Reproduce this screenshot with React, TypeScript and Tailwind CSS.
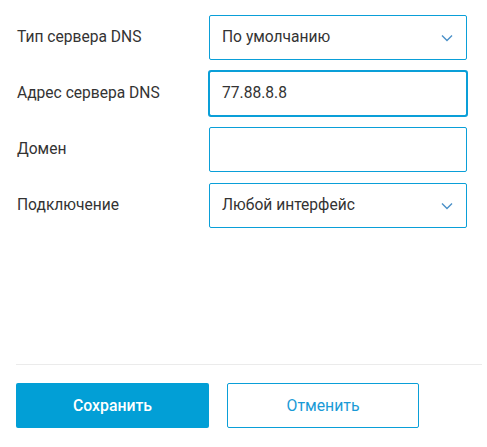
import React from "react";

const Chevron = () => (
  <svg width="12" height="8" viewBox="0 0 12 8" className="absolute right-[13px] top-1/2 -translate-y-1/2">
    <path d="M1 1.5 L6 6.5 L11 1.5" fill="none" stroke="#4a90c8" strokeWidth="1.4" />
  </svg>
);

function Row({ label, children }: { label: string; children: React.ReactNode }) {
  return (
    <div className="flex items-center">
      <div className="w-[193px] pl-px text-[15.6px] text-[#333333]">{label}</div>
      {children}
    </div>
  );
}

export default function App() {
  return (
    <div
      className="w-[487px] h-[447px] bg-white pl-4 pr-[5px] pt-[15px]"
      style={{ fontFamily: "Roboto, 'Noto Sans', sans-serif" }}
    >
      <div className="flex flex-col gap-[11px]">
        <Row label="Тип сервера DNS">
          <div className="relative w-[258px] h-[45px] border border-[#0a9fd8] rounded-[2px] flex items-center pl-3 text-[15.6px] text-[#333333]">
            По умолчанию
            <Chevron />
          </div>
        </Row>
        <Row label="Адрес сервера DNS">
          <div className="relative w-[258px] h-[45px] border border-[#0a9fd8] outline outline-2 outline-offset-[-1px] outline-[#0a9fd8] rounded-[2px] flex items-center pl-3 text-[15.6px] text-[#333333]">
            77.88.8.8
          </div>
        </Row>
        <Row label="Домен">
          <div className="w-[258px] h-[45px] border border-[#0a9fd8] rounded-[2px]" />
        </Row>
        <Row label="Подключение">
          <div className="relative w-[258px] h-[45px] border border-[#0a9fd8] rounded-[2px] flex items-center pl-3 text-[15.6px] text-[#333333]">
            Любой интерфейс
            <Chevron />
          </div>
        </Row>
      </div>
      <div className="mt-[136px] h-px bg-[#ebebeb]" />
      <div className="mt-[18px] flex gap-[18px]">
        <button className="w-[193px] h-[45px] rounded-[2px] bg-[#029fd6] text-white text-[15.8px] font-medium">
          Сохранить
        </button>
        <button className="w-[192px] h-[45px] rounded-[2px] border border-[#0a9fd8] bg-white text-[#1a9ad6] text-[15.8px]">
          Отменить
        </button>
      </div>
    </div>
  );
}
